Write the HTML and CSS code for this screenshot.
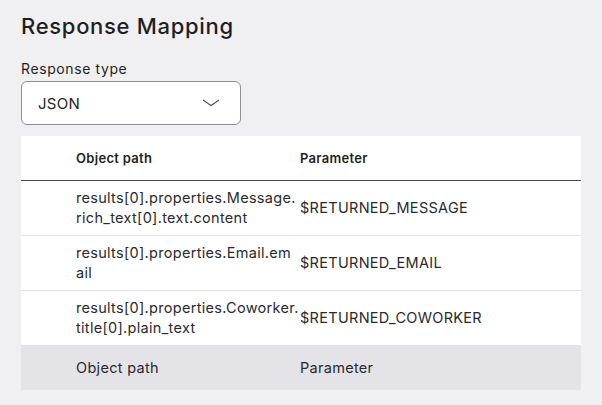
FILE: index.html
```html
<!DOCTYPE html>
<html lang="en">

<head>
    <meta charset="UTF-8">
    <meta name="viewport" content="width=device-width, initial-scale=1.0">
    <title>Response Mapping</title>
    <link rel="stylesheet" href="styles.css">
</head>

<body>
    <div class="panel">
        <h2>Response Mapping</h2>

        <!-- Response type select -->
        <label class="field-label">Response type</label>
        <div class="select">
            <span>JSON</span>
            <svg width="18" height="8" viewBox="0 0 18 8">
                <path d="M1 1 L9 6.5 L17 1" fill="none" stroke="#555" stroke-width="1.2" />
            </svg>
        </div>

        <!-- Mapping table -->
        <div class="mapping">
            <div class="row head">
                <div class="cell path">Object path</div>
                <div class="cell param">Parameter</div>
            </div>
            <div class="row">
                <div class="cell path">results[0].properties.Message.<wbr>rich_text[0].text.content</div>
                <div class="cell param">$RETURNED_MESSAGE</div>
            </div>
            <div class="row">
                <div class="cell path">results[0].properties.Email.em<wbr>ail</div>
                <div class="cell param">$RETURNED_EMAIL</div>
            </div>
            <div class="row">
                <div class="cell path">results[0].properties.Coworker.<wbr>title[0].plain_text</div>
                <div class="cell param">$RETURNED_COWORKER</div>
            </div>
            <div class="row new">
                <div class="cell path">Object path</div>
                <div class="cell param">Parameter</div>
            </div>
        </div>
    </div>
</body>

</html>
```

FILE: styles.css
```css
/* Response mapping panel */
body {
    margin: 0;
    background: #f0f0f3;
    font-family: Inter, "Noto Sans", sans-serif;
    color: #1f1f22;
}

.panel {
    padding: 13px 21px 14px 21px;
}

h2 {
    font-size: 22px;
    font-weight: 500;
    margin: 0 0 21px 0;
    letter-spacing: 0.7px;
}

.field-label {
    display: block;
    font-size: 14px;
    letter-spacing: 0.6px;
    margin-bottom: 4px;
}

.select {
    box-sizing: border-box;
    width: 220px;
    height: 44px;
    border: 1px solid #8e8e93;
    border-radius: 6px;
    background: white;
    display: flex;
    align-items: center;
    justify-content: space-between;
    padding: 0 20px 0 16px;
    font-size: 15px;
    letter-spacing: 0.3px;
    margin-bottom: 11px;
}

.mapping {
    background: white;
    width: 560px;
}

.row {
    display: grid;
    grid-template-columns: 224px 1fr;
    padding-left: 55px;
    min-height: 54px;
    align-items: center;
    border-bottom: 1px solid #e2e2e4;
    font-size: 14.5px;
    letter-spacing: 0.3px;
    line-height: 20px;
    color: #2a2a2e;
}

.row.head {
    min-height: 44px;
    border-bottom: 1px solid #4a4a4f;
    font-size: 13px;
    font-weight: 600;
    color: #1f1f22;
}

.row.new {
    background: #e3e3e8;
    min-height: 44px;
    border-bottom: none;
}

.cell.path {
    white-space: nowrap;
}

.cell.path wbr {
    display: block;
}
```
